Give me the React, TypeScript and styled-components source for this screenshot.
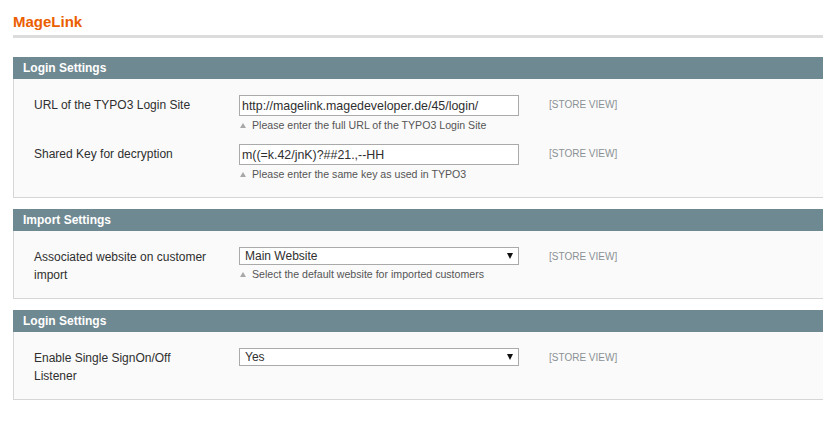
import React from 'react';
import styled, { createGlobalStyle } from 'styled-components';

type Field = {
  label: string;
  kind: 'text' | 'select';
  value: string;
  hint?: string;
};

type Section = {
  title: string;
  fields: Field[];
};

const SECTIONS: Section[] = [
  {
    title: 'Login Settings',
    fields: [
      {
        label: 'URL of the TYPO3 Login Site',
        kind: 'text',
        value: 'http://magelink.magedeveloper.de/45/login/',
        hint: 'Please enter the full URL of the TYPO3 Login Site',
      },
      {
        label: 'Shared Key for decryption',
        kind: 'text',
        value: 'm((=k.42/jnK)?##21.,--HH',
        hint: 'Please enter the same key as used in TYPO3',
      },
    ],
  },
  {
    title: 'Import Settings',
    fields: [
      {
        label: 'Associated website on customer import',
        kind: 'select',
        value: 'Main Website',
        hint: 'Select the default website for imported customers',
      },
    ],
  },
  {
    title: 'Login Settings',
    fields: [
      {
        label: 'Enable Single SignOn/Off Listener',
        kind: 'select',
        value: 'Yes',
      },
    ],
  },
];

const GlobalStyle = createGlobalStyle`
  html, body {
    margin: 0;
    padding: 0;
    background: #ffffff;
  }

  body {
    font-family: 'Liberation Sans', Arial, sans-serif;
    font-size: 12px;
    color: #2f2f2f;
    overflow: hidden;
  }
`;

const App: React.FC = () => {
  return (
    <>
      <GlobalStyle />
      <Page>
        <PageTitle>MageLink</PageTitle>
        {SECTIONS.map((section, idx) => (
          <Card key={`section-${idx + 1}`}>
            <CardHead>{section.title}</CardHead>
            <Fieldset>
              {section.fields.map((field, fIdx) => (
                <Row key={`field-${idx + 1}-${fIdx + 1}`}>
                  <Label>{field.label}</Label>
                  <ValueCell>
                    {field.kind === 'text' ? (
                      <TextInput type="text" defaultValue={field.value} readOnly />
                    ) : (
                      <SelectBox>
                        <span>{field.value}</span>
                        <Arrow />
                      </SelectBox>
                    )}
                    {field.hint && <Hint>{field.hint}</Hint>}
                  </ValueCell>
                  <Scope>[STORE VIEW]</Scope>
                </Row>
              ))}
            </Fieldset>
          </Card>
        ))}
      </Page>
    </>
  );
};

const Page = styled.main`
  width: 100%;
  padding-left: 13px;
  box-sizing: border-box;
  overflow: hidden;
`;

const PageTitle = styled.h3`
  margin: 13px -20px 19px 0;
  padding-bottom: 4px;
  border-bottom: 3px solid #dcdcdc;
  font-size: 15px;
  line-height: 18px;
  font-weight: bold;
  color: #eb5e00;
`;

const Card = styled.section`
  margin-right: -20px;
  margin-bottom: 11px;
`;

const CardHead = styled.h4`
  margin: 0;
  padding: 2px 10px;
  height: 18px;
  background-color: #6f8992;
  color: #ffffff;
  font-size: 12px;
  line-height: 18px;
  font-weight: bold;
`;

const Fieldset = styled.div`
  display: flex;
  flex-direction: column;
  row-gap: 11px;
  padding: 16px 20px 15px 20px;
  background-color: #fafafa;
  border: 1px solid #d6d6d6;
  border-top: 0;
`;

const Row = styled.div`
  display: grid;
  grid-template-columns: 205px 280px auto;
  align-items: start;
`;

const Label = styled.div`
  width: 178px;
  padding-top: 1px;
  margin-bottom: -1px;
  line-height: 18px;
  font-size: 12px;
  color: #2f2f2f;
`;

const ValueCell = styled.div`
  display: flex;
  flex-direction: column;
  width: 280px;
`;

const TextInput = styled.input`
  box-sizing: border-box;
  width: 280px;
  height: 21px;
  margin: 0;
  padding: 0 2px;
  border: 1px solid #aaaaaa;
  background: #ffffff;
  font-family: 'Liberation Sans', Arial, sans-serif;
  font-size: 12.4px;
  color: #2f2f2f;
  outline: none;
`;

const SelectBox = styled.div`
  box-sizing: border-box;
  width: 280px;
  height: 18px;
  display: flex;
  align-items: center;
  justify-content: space-between;
  padding: 0 5px;
  border: 1px solid #aaaaaa;
  background: #ffffff;
  font-size: 12px;
  color: #2f2f2f;
`;

const Arrow = styled.i`
  width: 0;
  height: 0;
  border-left: 3px solid transparent;
  border-right: 3px solid transparent;
  border-top: 6px solid #111111;
`;

const Hint = styled.p`
  margin: 2px 0 0;
  display: flex;
  align-items: center;
  line-height: 15px;
  font-size: 10.6px;
  color: #555555;

  &::before {
    content: '';
    width: 0;
    height: 0;
    margin: 0 6px 0 1px;
    border-left: 3px solid transparent;
    border-right: 3px solid transparent;
    border-bottom: 5px solid #a8a8a8;
  }
`;

const Scope = styled.div`
  padding-left: 30px;
  padding-top: 1px;
  line-height: 18px;
  font-size: 10px;
  color: #8a9194;
  white-space: nowrap;
`;

export default App;
